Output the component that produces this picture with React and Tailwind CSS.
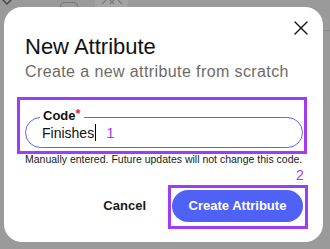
import React from 'react';

const CloseIcon = () => (
    <svg width="14" height="14" viewBox="0 0 14 14" fill="none" stroke="#111" strokeWidth="1.4" strokeLinecap="round">
        <path d="M1 1L13 13M13 1L1 13" />
    </svg>
);

const App = () => {
    return (
        <div className="w-[330px] h-[249px] bg-[#9a9a9a] relative overflow-hidden" style={{ fontFamily: '"Liberation Sans", Arial, sans-serif' }}>
            {/* page behind the overlay */}
            <div className="absolute top-0 left-0 w-full h-[10px] pointer-events-none">
                <svg className="absolute left-[0px] top-[-6px]" width="14" height="12" viewBox="0 0 14 12" fill="none" stroke="#444" strokeWidth="1.4">
                    <path d="M1 4L7 10L13 4" />
                </svg>
                <div className="absolute left-[60px] top-[2px] w-[18px] h-[14px] rounded-[4px] border border-[#777]" />
                <div className="absolute left-[95px] top-0 w-[33px] h-[8px] bg-[#a4a4a4]" />
                <svg className="absolute left-[100px] top-[-4px]" width="24" height="12" viewBox="0 0 24 12" fill="none" stroke="#7a7a7a" strokeWidth="1.2">
                    <path d="M2 8L8 2L14 8M10 8L16 2L22 8" />
                </svg>
            </div>
            <div className="absolute right-0 top-[30px] w-[8px] h-px bg-[#8a8a8a]" />

            <div className="relative ml-[4px] mt-[7px] w-[319px] h-[235px] bg-white rounded-[18px] pt-[26px] pl-[21px] pr-[20px]">
                <button className="absolute right-[15px] top-[14px] p-0">
                    <CloseIcon />
                </button>

                <h1 className="text-[22px] leading-[28px] text-[#111]">New Attribute</h1>
                <p className="-mt-px text-[16px] leading-[24px] tracking-[0.4px] text-[#6d6a67]">Create a new attribute from scratch</p>

                <div className="relative mt-[33px] h-[31px] rounded-full border border-[#5a67f0] flex items-center pl-[16px]">
                    <span className="absolute -top-[9px] left-[14px] bg-white px-[3px] text-[13px] leading-[13px] font-bold text-[#111]">
                        Code<span className="text-[#e0243c] relative -top-[2px]">*</span>
                    </span>
                    <span className="text-[14px] leading-[20px] text-[#111]">Finishes</span>
                    <span className="w-px h-[17px] bg-black ml-px" />
                    <span className="ml-[10px] text-[15px] leading-[20px] text-[#a23cf4]">1</span>
                </div>

                <p className="mt-[4px] text-[10.5px] leading-[14px] text-[#1a1a1a] whitespace-nowrap">
                    Manually entered. Future updates will not change this code.
                </p>

                <div className="mt-[24px] flex items-center justify-end gap-[26px]">
                    <button className="text-[13px] font-bold text-[#1a1a1a]">Cancel</button>
                    <button className="h-[32px] w-[131px] rounded-full bg-[#5062f6] text-white text-[13px] font-bold">
                        Create Attribute
                    </button>
                </div>

                {/* annotation overlays */}
                <div className="absolute left-[13px] top-[90px] w-[290px] h-[57px] border-[3px] border-[#a23cf4] pointer-events-none" />
                <span className="absolute left-[292px] top-[161px] text-[14px] leading-[14px] text-[#a23cf4]">2</span>
                <div className="absolute left-[164px] top-[178px] w-[140px] h-[44px] border-[3px] border-[#a23cf4] pointer-events-none" />
            </div>
        </div>
    );
};

export default App;
